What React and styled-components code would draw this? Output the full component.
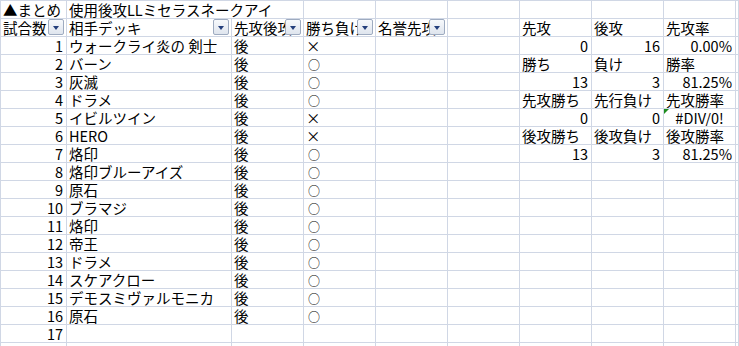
import React from 'react'
import styled, { createGlobalStyle } from 'styled-components'

const GlobalStyle = createGlobalStyle`
  html, body {
    margin: 0;
    padding: 0;
    background: #fff;
    overflow: hidden;
  }
  body {
    font-family: "Noto Sans CJK JP", "Liberation Sans", sans-serif;
  }
`

const GRID = '#d0d7e5'

const Sheet = styled.div`
  display: grid;
  grid-template-columns: 66px 165px repeat(7, 72px) 1fr;
  grid-auto-rows: 18px;
  width: 739px;
  box-sizing: border-box;
  border-top: 1px solid ${GRID};
  border-left: 1px solid ${GRID};
  font-size: 14.5px;
  color: #000;
`

const Cell = styled.div`
  position: relative;
  box-sizing: border-box;
  grid-column: span ${p => p.$span || 1};
  display: flex;
  align-items: flex-end;
  justify-content: ${p =>
    p.$align === 'right' ? 'flex-end' : p.$align === 'center' ? 'center' : 'flex-start'};
  padding: 0 ${p => (p.$align === 'right' ? '3px' : '0')} 0 ${p => (p.$align === 'left' || !p.$align ? '2px' : '0')};
  border-right: 1px solid ${GRID};
  border-bottom: 1px solid ${GRID};
  line-height: 16px;
  white-space: nowrap;
  overflow: hidden;

  ${p =>
    p.$flag &&
    `
    &::before {
      content: '';
      position: absolute;
      left: 0;
      top: 0;
      border-top: 5px solid #1e8c1e;
      border-right: 5px solid transparent;
    }
  `}
`

// win / loss mark; the circle is drawn a bit smaller than the cross
const Mark = styled.span`
  font-size: ${p => (p.$win ? '12px' : '14.5px')};
  line-height: ${p => (p.$win ? '14px' : '16px')};
  margin-left: ${p => (p.$win ? '2px' : '0')};
`

// autofilter drop-down sitting on the right of a header cell
const Filter = styled.span`
  position: absolute;
  right: 2px;
  top: 0;
  width: 16px;
  height: 16px;
  box-sizing: border-box;
  border: 1px solid #9eabc0;
  border-radius: 2px;
  background: linear-gradient(#f7f9fc, #dfe5ee);
  display: flex;
  align-items: center;
  justify-content: center;

  &::after {
    content: '';
    margin-top: 1px;
    border-top: 4px solid #243f7c;
    border-left: 3.5px solid transparent;
    border-right: 3.5px solid transparent;
  }
`

const games = [
  ['ウォークライ炎の 剣士', '×'],
  ['バーン', '○'],
  ['灰滅', '○'],
  ['ドラメ', '○'],
  ['イビルツイン', '×'],
  ['HERO', '×'],
  ['烙印', '○'],
  ['烙印ブルーアイズ', '○'],
  ['原石', '○'],
  ['ブラマジ', '○'],
  ['烙印', '○'],
  ['帝王', '○'],
  ['ドラメ', '○'],
  ['スケアクロー', '○'],
  ['デモスミヴァルモニカ', '○'],
  ['原石', '○'],
]

const stats = [
  ['先攻', '後攻', '先攻率'],
  [0, 16, '0.00%'],
  ['勝ち', '負け', '勝率'],
  [13, 3, '81.25%'],
  ['先攻勝ち', '先行負け', '先攻勝率'],
  [0, 0, '#DIV/0!'],
  ['後攻勝ち', '後攻負け', '後攻勝率'],
  [13, 3, '81.25%'],
]

const headers = ['試合数', '相手デッキ', '先攻後攻', '勝ち負け', '名誉先攻']

function statCell(v, key) {
  if (v === '#DIV/0!') {
    return (
      <Cell key={key} $align="center" $flag>
        {v}
      </Cell>
    )
  }
  const isNum = typeof v === 'number' || /%$/.test(v)
  return (
    <Cell key={key} $align={isNum ? 'right' : 'left'}>
      {v}
    </Cell>
  )
}

function buildRow(r) {
  const cells = []
  if (r === 0) {
    cells.push(<Cell key="a">▲まとめ</Cell>)
    cells.push(
      <Cell key="b" $span={2}>
        使用後攻LLミセラスネークアイ
      </Cell>
    )
    for (let c = 3; c < 10; c++) cells.push(<Cell key={c} />)
    return cells
  }

  const stat = r >= 1 && r <= 8 ? stats[r - 1] : null

  if (r === 1) {
    headers.forEach((h, i) =>
      cells.push(
        <Cell key={i}>
          {h}
          <Filter />
        </Cell>
      )
    )
    cells.push(<Cell key="f" />)
  } else {
    const n = r - 1
    const game = games[n - 1]
    cells.push(
      <Cell key="a" $align="right">
        {n <= 17 ? n : ''}
      </Cell>
    )
    cells.push(<Cell key="b">{game ? game[0] : ''}</Cell>)
    cells.push(<Cell key="c">{game ? '後' : ''}</Cell>)
    cells.push(
      <Cell key="d">{game ? <Mark $win={game[1] === '○'}>{game[1]}</Mark> : ''}</Cell>
    )
    cells.push(<Cell key="e" />)
    cells.push(<Cell key="f" />)
  }

  if (stat) {
    stat.forEach((v, i) => cells.push(statCell(v, 'g' + i)))
  } else {
    cells.push(<Cell key="g" />, <Cell key="h" />, <Cell key="i" />)
  }
  cells.push(<Cell key="j" />)
  return cells
}

export default function App() {
  const rows = []
  for (let r = 0; r < 20; r++) rows.push(...buildRow(r).map(c => React.cloneElement(c, { key: r + '-' + c.key })))

  return (
    <>
      <GlobalStyle />
      <Sheet lang="ja">{rows}</Sheet>
    </>
  )
}
